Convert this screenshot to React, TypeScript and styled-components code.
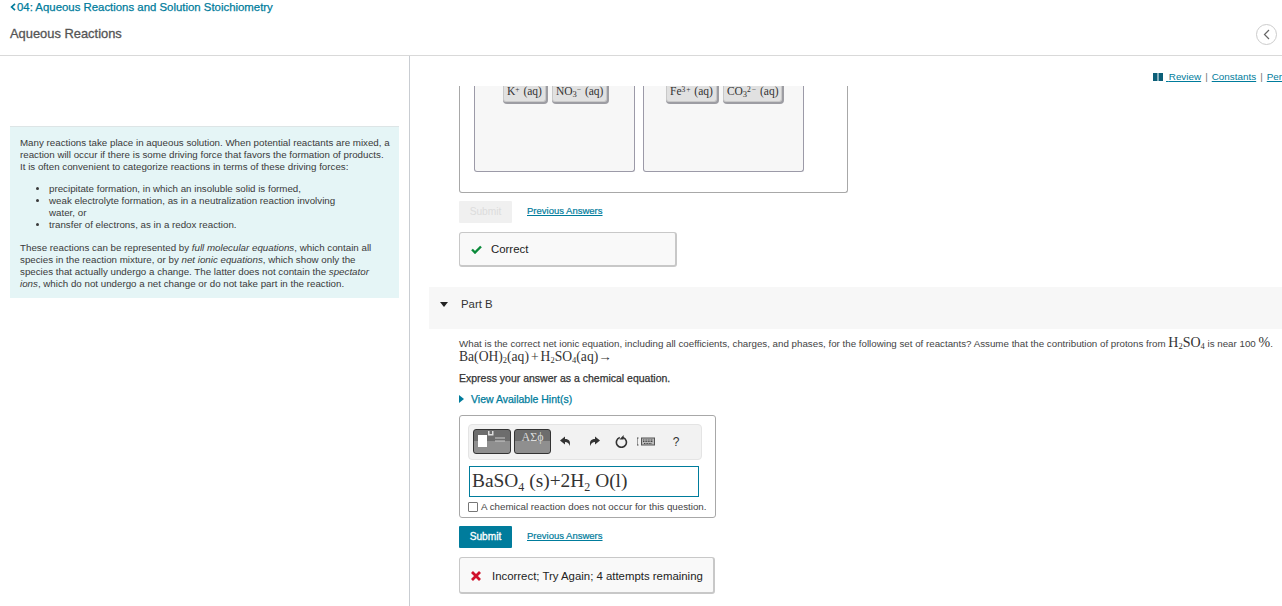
import React from "react";
import styled, { createGlobalStyle } from "styled-components";

const teal = "#007c9c";

const GlobalStyle = createGlobalStyle`
  html, body {
    margin: 0;
    padding: 0;
    height: 606px;
    overflow: hidden;
    background: #fff;
    font-family: "Liberation Sans", Arial, sans-serif;
    color: #333;
  }
`;

const Page = styled.div`
  width: 1282px;
  height: 606px;
  display: flex;
  flex-direction: column;
  overflow: hidden;
`;

const Header = styled.header`
  height: 56px;
  flex: none;
  box-sizing: border-box;
  border-bottom: 1px solid #d9d9d9;
  padding: 1px 5px 0 10px;
  display: grid;
  grid-template-columns: 1fr auto;
  grid-template-rows: 12px auto;
  row-gap: 14px;
`;

const Crumb = styled.a`
  grid-column: 1 / 3;
  display: flex;
  align-items: center;
  gap: 1px;
  font-size: 11.4px;
  line-height: 12px;
  color: ${teal};
  -webkit-text-stroke: 0.25px ${teal};
`;

const Title = styled.h1`
  margin: 0;
  font-size: 12.9px;
  line-height: 14px;
  font-weight: 400;
  color: #555;
  -webkit-text-stroke: 0.3px #555;
`;

const CollapseButton = styled.div`
  width: 21px;
  height: 21px;
  box-sizing: border-box;
  margin-top: -3px;
  border: 1px solid #ccc;
  border-radius: 50%;
  display: flex;
  align-items: center;
  justify-content: center;
`;

const Columns = styled.div`
  flex: 1;
  display: flex;
  min-height: 0;
`;

const LeftColumn = styled.aside`
  width: 410px;
  flex: none;
  box-sizing: border-box;
  border-right: 1px solid #c9cdd2;
  padding: 70px 10px 0 10px;
`;

const IntroBox = styled.div`
  box-sizing: border-box;
  height: 172px;
  background: #e5f5f6;
  border-top: 1px solid #dde5e6;
  padding: 10px 9px 0 10px;
  font-size: 9.75px;
  line-height: 12px;
  color: #3a3a3a;

  p {
    margin: 0;
  }
`;

const Bullets = styled.ul`
  margin: 10px 0 11px;
  padding: 0 40px 0 29px;
`;

const Bullet = styled.li`
  padding-left: 0;
`;

const RightColumn = styled.main`
  flex: 1;
  min-width: 0;
  padding: 0 0 0 19px;
`;

const LinksRow = styled.div`
  height: 30px;
  box-sizing: border-box;
  padding: 12px 0 0 724px;
  display: flex;
  align-items: center;
  white-space: nowrap;
  font-size: 9.9px;
  line-height: 12px;
  color: #777;
`;

const BookIcon = styled.svg`
  flex: none;
  margin-right: 3px;
`;

const TopLink = styled.a`
  color: ${teal};
  text-decoration: underline;
`;

const Pipe = styled.span`
  margin: 0 4px;
`;

const Inner = styled.div`
  padding-left: 30px;
`;

const DragPanel = styled.div`
  width: 389px;
  height: 107px;
  box-sizing: border-box;
  border: 1px solid #a8a8a8;
  border-top: none;
  border-radius: 0 0 3px 3px;
  padding: 0 0 0 14px;
  overflow: hidden;
  display: flex;
  gap: 8px;
`;

const Bin = styled.div<{ $pad: number }>`
  width: 161px;
  height: 86px;
  box-sizing: border-box;
  background: #f7f7f7;
  border: 1px solid #9c9aa8;
  border-top: none;
  border-radius: 0 0 3px 3px;
  display: flex;
  gap: 6px;
  padding-left: ${(p) => p.$pad}px;
`;

const Tile = styled.div`
  height: 16px;
  box-sizing: border-box;
  padding: 0 3px 2px;
  background: #e1e1e1;
  border: 1px solid #c9c9c9;
  border-top: none;
  border-radius: 0 0 3px 3px;
  box-shadow: 1px 1px 0 1px #9d9da3;
  font-family: "Liberation Serif", serif;
  font-size: 11.5px;
  line-height: 11px;
  color: #333;
  white-space: nowrap;
`;

const Sup = styled.sup`
  font-size: 7.5px;
  line-height: 0;
  letter-spacing: 1px;
  vertical-align: 3px;
`;

const Sub = styled.sub`
  font-size: 8.5px;
  line-height: 0;
  vertical-align: -2px;
`;

const SubmitRow = styled.div<{ $top: number }>`
  display: flex;
  align-items: center;
  gap: 15px;
  margin-top: ${(p) => p.$top}px;
`;

const SubmitButton = styled.button<{ $disabled?: boolean }>`
  width: 53px;
  height: 22px;
  padding: 0 0 2px;
  border: none;
  border-radius: 1px;
  font-family: inherit;
  font-size: 10.2px;
  background: ${(p) => (p.$disabled ? "#f0f0f0" : teal)};
  color: ${(p) => (p.$disabled ? "#dcdcdc" : "#fff")};
  -webkit-text-stroke: ${(p) => (p.$disabled ? "0" : "0.3px #fff")};
`;

const PrevLink = styled.a`
  font-size: 9.5px;
  padding-bottom: 4px;
  color: ${teal};
  text-decoration: underline;
  -webkit-text-stroke: 0.2px ${teal};
`;

const Feedback = styled.div<{ $w: number; $h: number; $gap: number; $drop?: number }>`
  width: ${(p) => p.$w}px;
  height: ${(p) => p.$h}px;
  box-sizing: border-box;
  margin-top: 9px;
  padding: ${(p) => p.$drop ?? 0}px 0 0 11px;
  display: flex;
  align-items: center;
  gap: ${(p) => p.$gap}px;
  background: #f9f9f9;
  border: 1px solid #c8c8c8;
  border-right-width: 2px;
  border-bottom-width: 2px;
  border-radius: 3px;
  font-size: 11.4px;
  color: #222;
  white-space: nowrap;
`;

const PartBar = styled.div`
  height: 42px;
  box-sizing: border-box;
  margin-top: 20px;
  background: #f7f7f7;
  display: flex;
  align-items: center;
  padding: 0 0 8px 11px;
  gap: 13px;
  font-size: 11.4px;
  color: #333;
`;

const Question = styled.div`
  font-size: 9.75px;
  line-height: 12px;
  color: #444;
  margin-top: 8px;
  white-space: nowrap;
`;

const Formula = styled.span`
  font-family: "Liberation Serif", serif;
  font-size: 14px;
  color: #333;
`;

const Reactants = styled.div`
  font-family: "Liberation Serif", serif;
  font-size: 13.6px;
  line-height: 15px;
  color: #333;
  margin-top: -1px;
  white-space: nowrap;
`;

const Plus = styled.span`
  margin: 0 2px;
`;

const Express = styled.div`
  margin-top: 7px;
  font-size: 10.5px;
  line-height: 14px;
  color: #333;
  -webkit-text-stroke: 0.25px #333;
`;

const HintRow = styled.div`
  margin-top: 8px;
  display: flex;
  align-items: center;
  gap: 7px;
  font-size: 10.5px;
  line-height: 12px;
  color: ${teal};
  -webkit-text-stroke: 0.25px ${teal};
`;

const EditorBox = styled.div`
  width: 257px;
  height: 103px;
  box-sizing: border-box;
  margin-top: 10px;
  padding: 8px 0 0 8px;
  border: 1px solid #a8a8a8;
  border-radius: 3px;
`;

const Toolbar = styled.div`
  width: 234px;
  height: 36px;
  box-sizing: border-box;
  background: #f2f2f2;
  border: 1px solid #e4e4e4;
  border-radius: 4px;
  padding: 4px 0 0 4px;
  display: flex;
  align-items: flex-start;
`;

const PaletteButton = styled.div<{ $w: number }>`
  width: ${(p) => p.$w}px;
  height: 25px;
  flex: none;
  box-sizing: border-box;
  margin-right: 3px;
  border: 1px solid #333;
  border-radius: 3px;
  background: linear-gradient(#6d6d6d 0 50%, #8f8f8f 50% 100%);
  color: #ddd;
  font-family: "Liberation Serif", serif;
  font-size: 12px;
  line-height: 15px;
  text-align: center;
  overflow: hidden;
`;

const ToolIcon = styled.div<{ $w: number }>`
  width: ${(p) => p.$w}px;
  height: 25px;
  flex: none;
  display: flex;
  align-items: center;
  justify-content: center;
  color: #333;
  font-size: 12px;
`;

const AnswerField = styled.div`
  width: 230px;
  height: 31px;
  box-sizing: border-box;
  margin: 6px 0 0 1px;
  border: 1px solid ${teal};
  padding-left: 2px;
  font-family: "Liberation Serif", serif;
  font-size: 19.4px;
  line-height: 27px;
  color: #333;
  white-space: nowrap;
`;

const AnswerSub = styled.sub`
  font-size: 12px;
  line-height: 0;
  vertical-align: -4px;
`;

const CheckRow = styled.label`
  display: flex;
  align-items: center;
  gap: 3px;
  margin-top: 4px;
  font-size: 9.75px;
  line-height: 12px;
  color: #444;
  white-space: nowrap;
`;

const CheckBox = styled.span`
  width: 8px;
  height: 8px;
  flex: none;
  border: 1px solid #777;
  border-radius: 1px;
  background: #fff;
`;

const App = () => (
  <Page>
    <GlobalStyle />
    <Header>
      <Crumb>
        <svg width="6" height="8" viewBox="0 0 6 8">
          <path d="M5 .8 1.6 4 5 7.2" fill="none" stroke={teal} strokeWidth="1.7" />
        </svg>
        04: Aqueous Reactions and Solution Stoichiometry
      </Crumb>
      <Title>Aqueous Reactions</Title>
      <CollapseButton>
        <svg width="7" height="11" viewBox="0 0 7 11">
          <path d="M6 1 1.5 5.5 6 10" fill="none" stroke="#666" strokeWidth="1.2" />
        </svg>
      </CollapseButton>
    </Header>
    <Columns>
      <LeftColumn>
        <IntroBox>
          <p>
            Many reactions take place in aqueous solution. When potential reactants are mixed, a
            reaction will occur if there is some driving force that favors the formation of products.
            It is often convenient to categorize reactions in terms of these driving forces:
          </p>
          <Bullets>
            <Bullet>precipitate formation, in which an insoluble solid is formed,</Bullet>
            <Bullet>weak electrolyte formation, as in a neutralization reaction involving water, or</Bullet>
            <Bullet>transfer of electrons, as in a redox reaction.</Bullet>
          </Bullets>
          <p>
            These reactions can be represented by <em>full molecular equations</em>, which contain all
            species in the reaction mixture, or by <em>net ionic equations</em>, which show only the
            species that actually undergo a change. The latter does not contain the <em>spectator</em>{" "}
            <em>ions</em>, which do not undergo a net change or do not take part in the reaction.
          </p>
        </IntroBox>
      </LeftColumn>
      <RightColumn>
        <LinksRow>
          <BookIcon width="10" height="8" viewBox="0 0 10 8">
            <path d="M0 0h4.5v8H0zM5.5 0H10v8H5.5z" fill="#0b5f78" />
          </BookIcon>
          <TopLink>{"\u00a0"}Review</TopLink>
          <Pipe>|</Pipe>
          <TopLink>Constants</TopLink>
          <Pipe>|</Pipe>
          <TopLink>Periodic Table</TopLink>
        </LinksRow>
        <Inner>
          <DragPanel>
            <Bin $pad={28}>
              <Tile>
                K<Sup>+</Sup> (aq)
              </Tile>
              <Tile>
                NO<Sub>3</Sub>
                <Sup>−</Sup> (aq)
              </Tile>
            </Bin>
            <Bin $pad={22}>
              <Tile>
                Fe<Sup>3+</Sup> (aq)
              </Tile>
              <Tile>
                CO<Sub>3</Sub>
                <Sup>2−</Sup> (aq)
              </Tile>
            </Bin>
          </DragPanel>
          <SubmitRow $top={8}>
            <SubmitButton $disabled>Submit</SubmitButton>
            <PrevLink>Previous Answers</PrevLink>
          </SubmitRow>
          <Feedback $w={218} $h={35} $gap={9}>
            <svg width="11" height="9" viewBox="0 0 11 9">
              <path d="M1 4.5 4 7.5 10 1.5" fill="none" stroke="#0a8a3a" strokeWidth="2.4" />
            </svg>
            Correct
          </Feedback>
        </Inner>
        <PartBar>
          <svg width="8" height="5" viewBox="0 0 8 5">
            <path d="M0 0h8L4 5z" fill="#222" />
          </svg>
          Part B
        </PartBar>
        <Inner>
          <Question>
            What is the correct net ionic equation, including all coefficients, charges, and phases, for the
            following set of reactants? Assume that the contribution of protons from{" "}
            <Formula>
              H<Sub>2</Sub>SO<Sub>4</Sub>
            </Formula>{" "}
            is near 100 <Formula>%</Formula>.
          </Question>
          <Reactants>
            Ba(OH)<Sub>2</Sub>(aq)<Plus>+</Plus>H<Sub>2</Sub>SO<Sub>4</Sub>(aq)→
          </Reactants>
          <Express>Express your answer as a chemical equation.</Express>
          <HintRow>
            <svg width="5" height="8" viewBox="0 0 5 8">
              <path d="M0 0v8l5-4z" fill={teal} />
            </svg>
            View Available Hint(s)
          </HintRow>
          <EditorBox>
            <Toolbar>
              <PaletteButton $w={38}>
                <svg width="36" height="22" viewBox="0 0 36 22">
                  <path d="M4 5h9v12H4z" fill="#fff" />
                  <path d="M14 1h1.5v3h2.5V1h1.5v4.5H14z" fill="#ddd" />
                  <path d="M21 8h10M21 11h10" stroke="#ccc" strokeWidth="1" />
                </svg>
              </PaletteButton>
              <PaletteButton $w={37}>ΑΣϕ</PaletteButton>
              <ToolIcon $w={23}>
                <svg width="11" height="11" viewBox="0 0 11 10">
                  <path d="M5 0 0 4l5 4V5.5c2.5 0 4 1 4.5 4C11 5 9 2.5 5 2.5z" fill="#333" />
                </svg>
              </ToolIcon>
              <ToolIcon $w={34}>
                <svg width="11" height="11" viewBox="0 0 11 10">
                  <path d="M6 0l5 4-5 4V5.5c-2.5 0-4 1-4.5 4C0 5 2 2.5 6 2.5z" fill="#333" />
                </svg>
              </ToolIcon>
              <ToolIcon $w={20}>
                <svg width="13" height="13" viewBox="0 0 13 13">
                  <path d="M8 2.6a5 5 0 1 1-3.2 0" fill="none" stroke="#333" strokeWidth="1.6" />
                  <path d="M8.6 0v4.4H4.4z" fill="#333" />
                </svg>
              </ToolIcon>
              <ToolIcon $w={30}>
                <svg width="18" height="9" viewBox="0 0 18 9">
                  <path d="M1.5 1H0v7h1.5" fill="none" stroke="#444" />
                  <rect x="4.5" y="1" width="13" height="7" fill="#bbb" stroke="#555" />
                  <path d="M6 3h10M6 4.5h10M7 6.5h8" stroke="#444" strokeDasharray="1 .6" />
                </svg>
              </ToolIcon>
              <ToolIcon $w={30}>?</ToolIcon>
            </Toolbar>
            <AnswerField>
              BaSO<AnswerSub>4</AnswerSub> (s)+2H<AnswerSub>2</AnswerSub> O(l)
            </AnswerField>
            <CheckRow>
              <CheckBox />A chemical reaction does not occur for this question.
            </CheckRow>
          </EditorBox>
          <SubmitRow $top={8}>
            <SubmitButton>Submit</SubmitButton>
            <PrevLink>Previous Answers</PrevLink>
          </SubmitRow>
          <Feedback $w={256} $h={37} $gap={11} $drop={2}>
            <svg width="10" height="10" viewBox="0 0 10 10">
              <path d="M1 1l8 8M9 1 1 9" stroke="#d0112b" strokeWidth="2.8" />
            </svg>
            Incorrect; Try Again; 4 attempts remaining
          </Feedback>
        </Inner>
      </RightColumn>
    </Columns>
  </Page>
);

export default App;
